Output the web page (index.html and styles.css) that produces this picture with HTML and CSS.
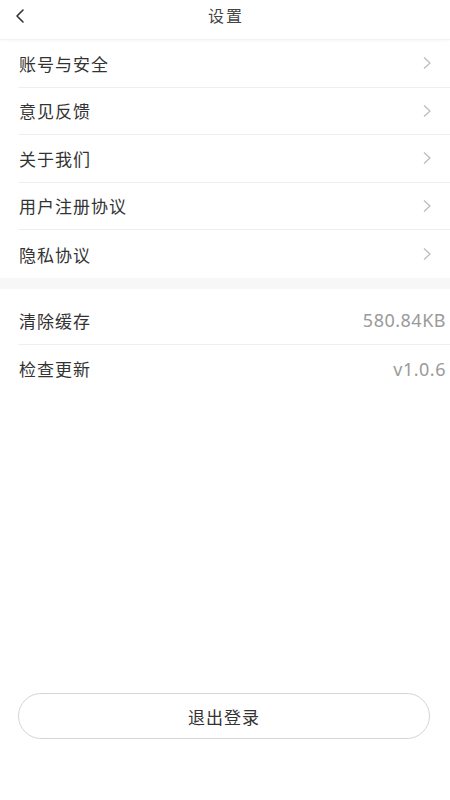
FILE: index.html
```html
<!DOCTYPE html>
<html lang="zh">
<head>
<meta charset="utf-8">
<title>设置</title>
<link rel="stylesheet" href="styles.css">
</head>
<body>
<div class="page">
  <header class="topbar">
    <span class="back">
      <svg width="12" height="16" viewBox="0 0 12 16"><path d="M9 2 L3 8 L9 14" fill="none" stroke="#333" stroke-width="1.6" stroke-linecap="round" stroke-linejoin="round"/></svg>
    </span>
    <h1 class="title">设置</h1>
  </header>

  <ul class="group">
    <li class="row"><span class="label">账号与安全</span><span class="arrow"><svg width="10" height="14" viewBox="0 0 10 14"><path d="M2 1.5 L8 7 L2 12.5" fill="none" stroke="#bbb" stroke-width="1.2" stroke-linejoin="round"/></svg></span></li>
    <li class="row"><span class="label">意见反馈</span><span class="arrow"><svg width="10" height="14" viewBox="0 0 10 14"><path d="M2 1.5 L8 7 L2 12.5" fill="none" stroke="#bbb" stroke-width="1.2" stroke-linejoin="round"/></svg></span></li>
    <li class="row"><span class="label">关于我们</span><span class="arrow"><svg width="10" height="14" viewBox="0 0 10 14"><path d="M2 1.5 L8 7 L2 12.5" fill="none" stroke="#bbb" stroke-width="1.2" stroke-linejoin="round"/></svg></span></li>
    <li class="row"><span class="label">用户注册协议</span><span class="arrow"><svg width="10" height="14" viewBox="0 0 10 14"><path d="M2 1.5 L8 7 L2 12.5" fill="none" stroke="#bbb" stroke-width="1.2" stroke-linejoin="round"/></svg></span></li>
    <li class="row last"><span class="label">隐私协议</span><span class="arrow"><svg width="10" height="14" viewBox="0 0 10 14"><path d="M2 1.5 L8 7 L2 12.5" fill="none" stroke="#bbb" stroke-width="1.2" stroke-linejoin="round"/></svg></span></li>
  </ul>

  <div class="band"></div>

  <ul class="group second">
    <li class="row"><span class="label">清除缓存</span><span class="value">580.84KB</span></li>
    <li class="row last"><span class="label">检查更新</span><span class="value">v1.0.6</span></li>
  </ul>

  <div class="footer">
    <button class="logout">退出登录</button>
  </div>
</div>
</body>
</html>
```

FILE: styles.css
```css
* { box-sizing: border-box; }
html, body {
  margin: 0;
  padding: 0;
  background: #fff;
  font-family: "Noto Sans CJK SC", "Noto Sans", sans-serif;
  color: #333;
}
.page {
  display: flex;
  flex-direction: column;
  height: 800px;
}
.topbar {
  position: relative;
  height: 40px;
  display: flex;
  align-items: center;
  justify-content: center;
  border-bottom: 1px solid #f2f2f2;
  box-shadow: 0 1px 3px rgba(0,0,0,0.03);
}
.back {
  position: absolute;
  left: 14px;
  top: 8px;
  display: flex;
}
.title {
  margin: 0 0 9px 0;
  font-size: 16px;
  font-weight: normal;
  letter-spacing: 2px;
  color: #444;
  line-height: 1;
  padding-left: 2px;
}
.group {
  list-style: none;
  margin: 0;
  padding: 0 0 0 19px;
}
.row {
  height: 47.5px;
  display: flex;
  align-items: center;
  justify-content: space-between;
  padding-right: 19px;
  border-bottom: 1px solid #eeeeee;
}
.row.last { border-bottom: none; height: 48px; }
.label {
  font-size: 17px;
  letter-spacing: 1px;
  color: #333;
  line-height: 1;
}
.arrow { display: flex; margin-right: -1px; }
.value {
  font-family: "Noto Sans", sans-serif;
  font-size: 18px;
  letter-spacing: 0.5px;
  color: #9a9a9a;
  line-height: 1;
  margin-right: -15px;
}
.band {
  height: 11px;
  background: #f7f7f7;
}
.second { padding-top: 8px; }
.footer {
  margin-top: auto;
  padding: 0 20px 61px 18px;
}
.logout {
  width: 100%;
  height: 46px;
  border: 1px solid #d4d4d4;
  border-radius: 23px;
  background: #fff;
  font-family: "Noto Sans CJK SC", sans-serif;
  font-size: 17px;
  letter-spacing: 1px;
  color: #333;
}
```
